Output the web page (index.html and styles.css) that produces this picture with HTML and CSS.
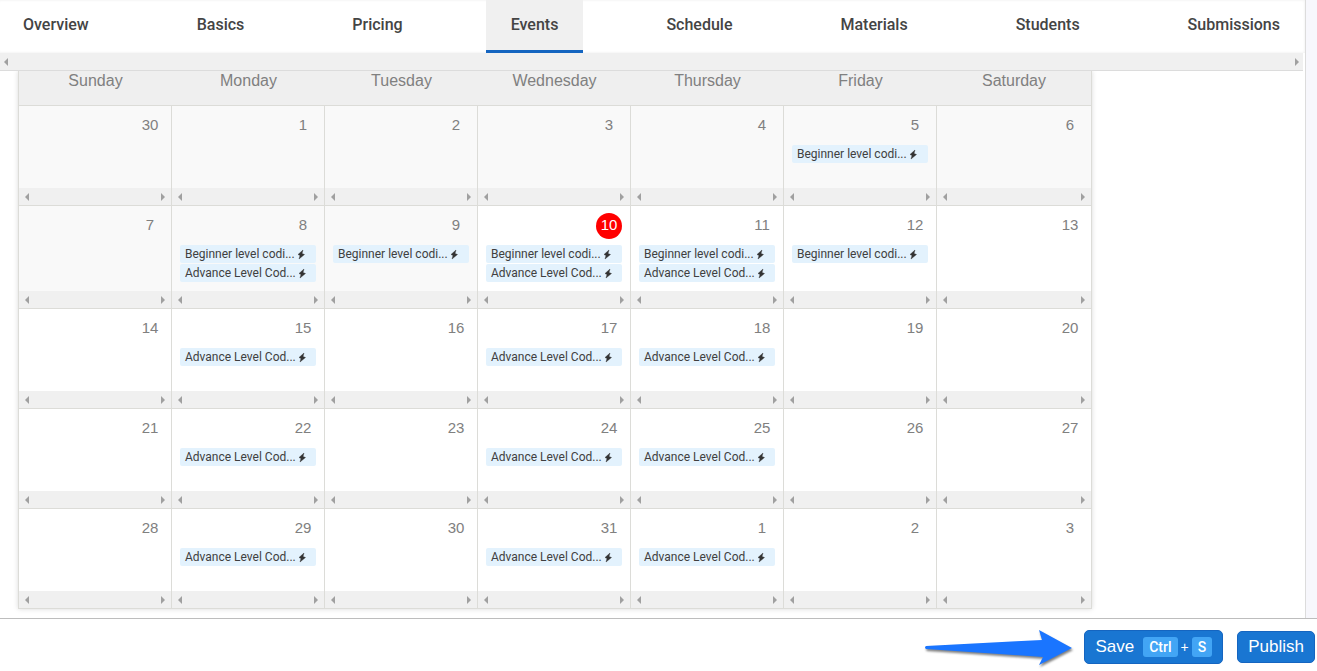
FILE: index.html
```
<!DOCTYPE html>
<html lang="en">

<head>
    <meta charset="UTF-8">
    <title>Events</title>
    <link rel="stylesheet" href="styles.css">
</head>

<body>
    <div class="page">
        <main class="main">
            <nav class="tabs">
                <a class="tab" href="#overview">Overview</a>
                <a class="tab" href="#basics">Basics</a>
                <a class="tab" href="#pricing">Pricing</a>
                <a class="tab active" href="#events">Events</a>
                <a class="tab" href="#schedule">Schedule</a>
                <a class="tab" href="#materials">Materials</a>
                <a class="tab" href="#students">Students</a>
                <a class="tab" href="#submissions">Submissions</a>
            </nav>
            <div class="scrollbar tabs-scrollbar"></div>
            <table class="calendar">
                <thead>
                    <tr>
                        <th>Sunday</th>
                        <th>Monday</th>
                        <th>Tuesday</th>
                        <th>Wednesday</th>
                        <th>Thursday</th>
                        <th>Friday</th>
                        <th>Saturday</th>
                    </tr>
                </thead>
                <tbody id="calendarBody"></tbody>
            </table>
        </main>
        <footer class="footer">
            <svg class="arrow" width="152" height="42" viewBox="0 0 152 42">
                <path d="M3 20 L119 14 L116 4 L149 22 L116 39 L120 31 L3 23 Q1 21.500 3 20z" fill="#1a75ff" />
            </svg>
            <button class="btn btn-save">Save <span class="keys"><kbd>Ctrl</kbd>+<kbd>S</kbd></span></button>
            <button class="btn">Publish</button>
        </footer>
    </div>
    <script src="calendar.js"></script>
</body>

</html>
```

FILE: styles.css
```
* {
    box-sizing: border-box;
}

body {
    margin: 0;
    font-family: 'Liberation Sans', Arial, sans-serif;
    background: #f7f7fc;
}

.page {
    display: flex;
    flex-direction: column;
    height: 100vh;
}

.main {
    flex: 1;
    min-height: 0;
    overflow: hidden;
    margin-right: 11px;
    background: #fff;
    border-right: 1px solid #dcdcdc;
}

.tabs {
    display: flex;
    justify-content: space-between;
    height: 53px;
    margin-left: -2px;
    box-shadow: inset 0 0 3px rgba(0, 0, 0, 0.08);
}

.tab {
    padding: 0 25px;
    border-bottom: 3px solid transparent;
    color: #444;
    font-family: Roboto, sans-serif;
    font-size: 16px;
    font-weight: 500;
    line-height: 50px;
    text-decoration: none;
}

.tab.active {
    background: #f0f0f0;
    border-bottom-color: #1565c0;
}

.scrollbar {
    display: flex;
    justify-content: space-between;
    align-items: center;
    height: 17px;
    padding: 0 6px;
    background: #f0f0f0;
}

.scrollbar::before,
.scrollbar::after {
    content: '';
    border: 4px solid transparent;
}

.scrollbar::before {
    border-left: none;
    border-right-color: #a0a0a0;
}

.scrollbar::after {
    border-right: none;
    border-left-color: #a0a0a0;
}

.tabs-scrollbar {
    position: relative;
    z-index: 1;
    height: 18px;
    margin-right: 2px;
    padding: 0 4px;
    border-bottom: 1px solid #dcdcdc;
}

.calendar {
    table-layout: fixed;
    width: calc(100% - 36px);
    max-width: 1074px;
    margin-left: 18px;
    border-collapse: separate;
    border-spacing: 0;
    border-left: 1px solid #dcdcd8;
    box-shadow: 0 0 5px rgba(0, 0, 0, 0.15);
    color: #808080;
}

.calendar th {
    width: 153px;
    height: 35px;
    padding: 0 0 15px;
    background: #efefef;
    border-bottom: 1px solid #dcdcd8;
    font-size: 16px;
    font-weight: normal;
    line-height: 19px;
}

.calendar th:last-child {
    width: auto;
    border-right: 1px solid #dcdcd8;
}

.calendar td {
    padding: 0;
    vertical-align: bottom;
    background: #fff;
    border-right: 1px solid #dcdcd8;
    border-bottom: 1px solid #dcdcd8;
}

.calendar td.past {
    background: #f9f9f9;
}

.day {
    display: flex;
    flex-direction: column;
    min-height: 82px;
    padding: 7px 8px 9px;
}

.number {
    align-self: flex-end;
    width: 26px;
    height: 26px;
    margin-bottom: 6px;
    border-radius: 50%;
    font-size: 15px;
    line-height: 24px;
    text-align: center;
}

.number.today {
    background: #f00;
    color: #fff;
}

.event {
    display: flex;
    align-items: center;
    gap: 2px;
    height: 18px;
    margin-bottom: 1px;
    padding: 0 5px;
    background: #e3f2fd;
    border-radius: 2px;
    color: #404040;
    font-family: Roboto, sans-serif;
    font-size: 12px;
    line-height: 18px;
    white-space: nowrap;
}

.event:last-child {
    margin-bottom: 0;
}

.footer {
    display: flex;
    flex-shrink: 0;
    justify-content: flex-end;
    align-items: center;
    height: 53px;
    padding: 4px 2px 0 0;
    background: #fff;
    border-top: 1px solid #bdbdbd;
}

.arrow {
    margin-right: 9px;
    filter: drop-shadow(1px 2px 1px rgba(0, 0, 0, 0.5));
}

.btn {
    height: 32px;
    padding: 0 10px;
    background: #1976d2;
    border: 1px solid #1565c0;
    border-radius: 5px;
    color: #fff;
    font-family: 'Liberation Sans', Arial, sans-serif;
    font-size: 17px;
    cursor: pointer;
}

.btn-save {
    display: flex;
    align-items: center;
    gap: 9px;
    height: 34px;
    margin-right: 14px;
}

.keys {
    display: flex;
    align-items: center;
    gap: 3px;
    font-size: 14px;
}

kbd {
    padding: 0 6px;
    background: #42a5f5;
    border-radius: 3px;
    font-family: Roboto, sans-serif;
    font-size: 14px;
    font-weight: 500;
    line-height: 20px;
}
```

FILE: calendar.js
```
const BEGINNER = 'Beginner level codi...';
const ADVANCE = 'Advance Level Cod...';
const TODAY = 10;

const events = {
    5: [BEGINNER],
    8: [BEGINNER, ADVANCE],
    9: [BEGINNER],
    10: [BEGINNER, ADVANCE],
    11: [BEGINNER, ADVANCE],
    12: [BEGINNER],
    15: [ADVANCE],
    17: [ADVANCE],
    18: [ADVANCE],
    22: [ADVANCE],
    24: [ADVANCE],
    25: [ADVANCE],
    29: [ADVANCE],
    31: [ADVANCE],
    32: [ADVANCE]
};

const bolt = '<svg width="8" height="12" viewBox="0 0 8 12"><path d="M6 2L1 6.500 3 7.500 2 11 7.500 6.500 5 5.500z" fill="#333" stroke="#333" stroke-width=".4"/></svg>';

// Day 0 is the last day of the previous month, days above 31 belong to the next one
function dayLabel(day) {
    if (day < 1) return 30;
    return day > 31 ? day - 31 : day;
}

const body = document.getElementById('calendarBody');
for (let week = 0; week < 5; week++) {
    const row = body.insertRow();
    for (let i = 0; i < 7; i++) {
        const day = week * 7 + i;
        const cell = row.insertCell();
        if (day < TODAY) cell.className = 'past';
        const items = (events[day] || []).map(name => `<div class="event"><span>${name}</span>${bolt}</div>`).join('');
        cell.innerHTML = `<div class="day"><span class="number ${day === TODAY ? 'today' : ''}">${dayLabel(day)}</span>${items}</div><div class="scrollbar"></div>`;
    }
}

// Cells of one week share the height of the busiest day
for (const row of body.rows) {
    const days = [...row.querySelectorAll('.day')];
    const height = Math.max(...days.map(d => d.offsetHeight));
    days.forEach(d => d.style.minHeight = height + 'px');
}
```
